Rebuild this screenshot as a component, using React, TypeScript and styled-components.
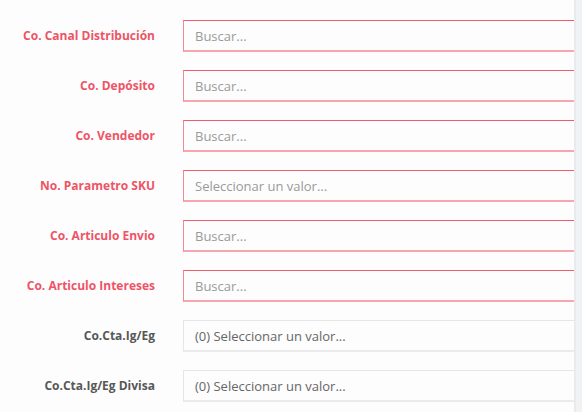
import React from "react";
import styled, { createGlobalStyle } from "styled-components";

const Global = createGlobalStyle`
  html, body { margin: 0; padding: 0; background: #f1f2f4; }
  body { font-family: "Open Sans", "Liberation Sans", sans-serif; }
`;

const Page = styled.div`
  display: flex;
  width: 582px;
  height: 412px;
  overflow: hidden;
`;

const Panel = styled.div`
  width: 574px;
  flex: none;
  background: #fdfdfd;
  overflow: hidden;
  padding-top: 20px;
  box-sizing: border-box;
  display: flex;
  flex-direction: column;
  gap: 18px;
`;

const Side = styled.div`
  flex: 1;
  background: #f1f2f4;
  border-left: 2px solid #e9eaec;
`;

const Row = styled.div`
  display: grid;
  grid-template-columns: 155px 420px;
  column-gap: 28px;
  align-items: center;
  height: 32px;
`;

const Label = styled.label<{ $required?: boolean }>`
  text-align: right;
  font-size: 12px;
  font-weight: 700;
  white-space: nowrap;
  padding-bottom: 2px;
  color: ${(p) => (p.$required ? "#ee5466" : "#575757")};
`;

const Field = styled.div<{ $required?: boolean }>`
  height: 32px;
  box-sizing: border-box;
  border: 1px solid ${(p) => (p.$required ? "#f28a94" : "#e6e6e6")};
  border-top-color: ${(p) => (p.$required ? "#ee5d6c" : "#e6e6e6")};
  border-bottom: 2px solid ${(p) => (p.$required ? "#f5a6ae" : "#ebebeb")};
  background: #fdfdfd;
  display: flex;
  align-items: center;
  padding-left: 11px;
  font-size: 13px;
  color: ${(p) => (p.$required ? "#9a9a9a" : "#666")};
`;

const rows: { label: string; value: string; required: boolean }[] = [
  { label: "Co. Canal Distribución", value: "Buscar...", required: true },
  { label: "Co. Depósito", value: "Buscar...", required: true },
  { label: "Co. Vendedor", value: "Buscar...", required: true },
  { label: "No. Parametro SKU", value: "Seleccionar un valor...", required: true },
  { label: "Co. Articulo Envio", value: "Buscar...", required: true },
  { label: "Co. Articulo Intereses", value: "Buscar...", required: true },
  { label: "Co.Cta.Ig/Eg", value: "(0) Seleccionar un valor...", required: false },
  { label: "Co.Cta.Ig/Eg Divisa", value: "(0) Seleccionar un valor...", required: false },
];

export default function App() {
  return (
    <>
      <Global />
      <Page>
        <Panel>
          {rows.map((r) => (
            <Row key={r.label}>
              <Label $required={r.required}>{r.label}</Label>
              <Field $required={r.required}>{r.value}</Field>
            </Row>
          ))}
        </Panel>
        <Side />
      </Page>
    </>
  );
}
